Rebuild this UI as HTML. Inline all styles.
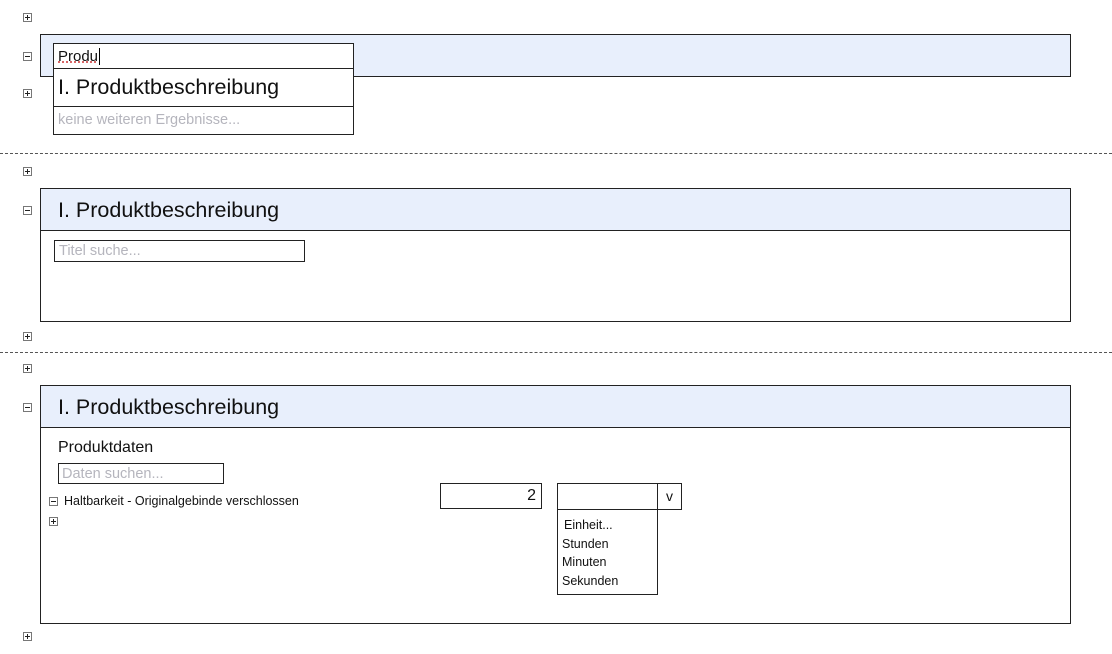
<!DOCTYPE html>
<html><head><meta charset="utf-8"><style>
*{margin:0;padding:0;box-sizing:border-box}
body{width:1112px;height:654px;background:#fff;position:relative;font-family:"Liberation Sans",sans-serif;color:#111;overflow:hidden}
.a{position:absolute}
.ic{position:absolute;width:9px;height:9px;border:1px solid #777;background:#fff}
.ic:before{content:"";position:absolute;left:1px;top:3px;width:5px;height:1px;background:#222}
.ic.p:after{content:"";position:absolute;left:3px;top:1px;width:1px;height:5px;background:#222}
.dash{position:absolute;left:0;width:1112px;border-top:1px dashed #555}
.panel{position:absolute;left:40px;width:1031px;border:1px solid #222;background:#fff}
.hd{background:#e8effc;height:42px;border-bottom:1px solid #222;font-size:21.5px;padding:9px 0 0 17px}
.box{position:absolute;border:1px solid #222;background:#fff}
.ph{color:#b5b5bd}
</style></head><body>
<div class="ic p" style="left:23px;top:13px"></div>
<div class="ic" style="left:23px;top:52px"></div>
<div class="ic p" style="left:23px;top:89px"></div>
<div class="panel" style="top:34px;height:43px;background:#e8effc"></div>
<div class="box" style="left:53px;top:43px;width:301px;height:92px">
 <div style="height:25px;border-bottom:1px solid #222;font-size:15px;padding:4px 0 0 4px"><span style="text-decoration:underline dotted #c33">Produ</span><span style="border-left:1px solid #000;margin-left:1px"></span></div>
 <div style="height:38px;border-bottom:1px solid #222;font-size:21.5px;padding:6px 0 0 4px">I. Produktbeschreibung</div>
 <div class="ph" style="font-size:14.5px;padding:5px 0 0 4px">keine weiteren Ergebnisse...</div>
</div>
<div class="dash" style="top:153px"></div>
<div class="ic p" style="left:23px;top:167px"></div>
<div class="ic" style="left:23px;top:206px"></div>
<div class="panel" style="top:188px;height:134px"><div class="hd">I. Produktbeschreibung</div></div>
<div class="box ph" style="left:54px;top:240px;width:251px;height:22px;font-size:14.5px;padding:2px 0 0 4px">Titel suche...</div>
<div class="ic p" style="left:23px;top:332px"></div>
<div class="dash" style="top:352px"></div>
<div class="ic p" style="left:23px;top:364px"></div>
<div class="ic" style="left:23px;top:403px"></div>
<div class="panel" style="top:385px;height:239px"><div class="hd">I. Produktbeschreibung</div></div>
<div class="a" style="left:58px;top:439px;font-size:16px">Produktdaten</div>
<div class="box ph" style="left:58px;top:463px;width:166px;height:21px;font-size:14.5px;padding:2px 0 0 3px">Daten suchen...</div>
<div class="ic" style="left:49px;top:497px"></div>
<div class="a" style="left:64px;top:494px;font-size:12.5px">Haltbarkeit - Originalgebinde verschlossen</div>
<div class="ic p" style="left:49px;top:517px"></div>
<div class="box" style="left:440px;top:483px;width:102px;height:26px;font-size:16px;text-align:right;padding:3px 5px 0 0">2</div>
<div class="box" style="left:557px;top:483px;width:125px;height:27px"><div style="position:absolute;left:99px;top:0;height:25px;border-left:1px solid #222;width:24px;text-align:center;font-size:14px;padding-top:4px">v</div></div>
<div class="box" style="left:557px;top:509px;width:101px;height:86px;font-size:12.5px;line-height:18.5px;padding:6px 0 0 4px">
<div style="padding-left:2px">Einheit...</div><div>Stunden</div><div>Minuten</div><div>Sekunden</div></div>
<div class="ic p" style="left:23px;top:632px"></div>
</body></html>
